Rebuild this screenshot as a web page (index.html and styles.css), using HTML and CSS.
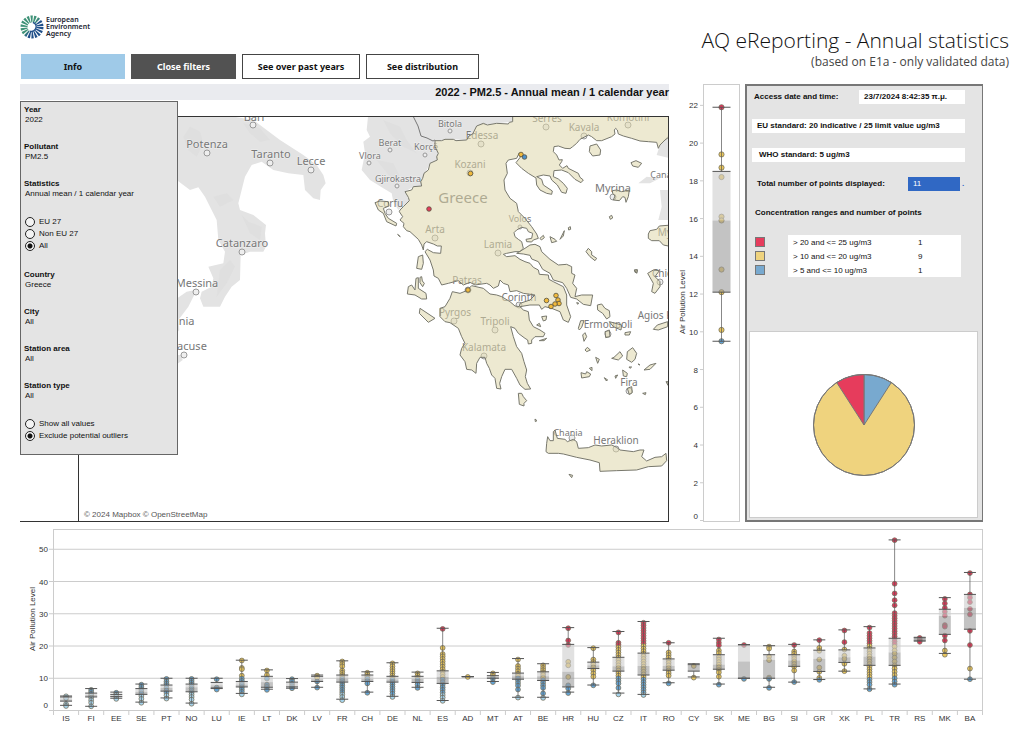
FILE: index.html
```html
<!DOCTYPE html>
<html lang="en">
<head>
    <meta charset="UTF-8" />
    <meta name="viewport" content="width=device-width, initial-scale=1.0">
    <title>AQ eReporting - Annual statistics</title>
    <link rel="stylesheet" href="styles.css">
</head>
<body>

    <header class="header">
        <div>
            <div class="logo">
                <svg width="26" height="26" viewBox="0 0 26 26" aria-hidden="true">
                    <defs>
                        <linearGradient id="sun" gradientUnits="userSpaceOnUse" x1="5" y1="6" x2="20" y2="19">
                            <stop offset="0.45" stop-color="#3f9277" />
                            <stop offset="0.6" stop-color="#20508a" />
                        </linearGradient>
                    </defs>
                    <circle cx="12" cy="13" r="8" fill="none" stroke="url(#sun)" stroke-width="7" stroke-dasharray="1.8 0.99" />
                    <path d="M13 8.5 A4.6 4.6 0 0 1 10 17.2" fill="none" stroke="#20508a" stroke-width="1.4" />
                </svg>
                <span>European<br>Environment<br>Agency</span>
            </div>
            <nav class="buttons">
                <button class="btn btn-info">Info</button>
                <button class="btn btn-dark">Close filters</button>
                <button class="btn btn-years">See over past years</button>
                <button class="btn btn-dist">See distribution</button>
            </nav>
        </div>
        <div class="heading">
            <h1>AQ eReporting - Annual statistics</h1>
            <p>(based on E1a - only validated data)</p>
        </div>
    </header>

    <main>
        <div class="top">
            <section class="map-area">
                <h2>2022 - PM2.5 - Annual mean / 1 calendar year</h2>

                <svg class="map" viewBox="79 117 589 404" preserveAspectRatio="xMidYMid slice" role="img" aria-label="Map of Greece">
                    <!-- neighbouring land -->
                    <g class="land" transform="translate(170 100) scale(.33333)">
                        <path d="M-80,40 180,48 250,60 330,120 400,165 440,195 460,225 467,250 452,270 450,300 430,295 405,270 400,225 355,220 310,210 275,185 245,195 225,230 215,270 205,310 210,330 250,345 288,375 285,400 288,440 280,455 240,455 212,465 210,540 185,560 165,590 150,620 100,620 90,595 95,575 125,560 130,535 115,500 160,490 165,455 145,420 140,360 120,320 105,290 85,262 60,270 20,240 -80,240z" />
                        <path d="M0,610 50,575 85,568 70,590 55,620 25,660 28,690 0,720z M0,765 35,765 38,780 25,790 0,790z" />
                    </g>
                    <g class="land" transform="translate(350 110) scale(.33333)">
                        <path d="M55,10 50,60 60,80 40,95 45,130 35,180 60,210 100,235 125,250 130,275 145,300 178,272 165,245 190,230 215,228 218,205 240,160 262,150 265,130 255,92 310,88 350,90 368,72 380,48 440,40 488,35 488,10z" />
                        <path d="M955,75 930,105 920,135 960,145 960,75z M865,220 890,200 930,205 900,220z M930,240 960,240 960,330 925,330 935,290z" />
                    </g>
                    <g class="relief" transform="translate(170 100) scale(.33333)">
                        <path d="M40,110 60,80 90,95 100,130 80,170 55,150z M220,70 270,85 300,120 270,125 240,100z M130,290 170,280 190,300 150,320z M215,345 235,365 275,380 270,420 240,400z M150,510 180,480 195,500 170,550 140,590z M640,60 690,80 710,120 740,160 700,140 660,100z M620,180 670,190 700,250 660,230z" />
                    </g>

                    <!-- place names sit under the tinted country shape -->
                    <g id="places"></g>

                    <g class="greece" transform="translate(350 110) scale(.33333)">
                        <path d="M150,300 160,290 178,272 175,262 165,245 185,240 190,230 215,228 212,215 218,205 222,190 235,180 240,160 262,150 260,140 265,130 255,110 255,92 275,92 285,88 310,88 318,92 350,90 357,78 368,72 380,48 400,40 412,45 440,40 475,42 478,37 488,35 488,10 965,10 965,75 945,90 930,105 925,115 920,97 895,95 870,93 845,85 820,78 805,72 802,60 797,55 793,60 795,72 785,80 755,92 740,92 725,80 715,75 690,88 680,100 668,110 660,116 645,115 625,108 612,110 610,125 620,135 627,150 637,149 635,155 628,165 638,175 651,167 655,175 685,190 690,202 700,210 693,218 675,208 655,188 635,180 612,182 610,200 625,207 640,220 652,235 648,250 635,247 622,225 605,210 600,198 580,195 560,200 575,208 580,225 607,243 605,253 590,250 570,240 560,225 558,204 535,190 515,175 498,158 512,140 507,130 500,145 475,150 468,160 472,190 462,210 465,240 480,265 500,280 505,305 525,325 545,350 560,372 565,385 550,390 545,396 530,395 528,388 545,385 548,370 535,365 530,355 515,352 500,360 492,368 495,380 505,388 515,395 520,415 510,425 495,425 470,430 460,433 470,440 495,437 510,448 525,455 540,460 550,472 565,480 568,493 595,495 597,508 610,515 640,530 650,555 650,585 662,620 655,637 640,630 630,605 605,595 585,590 575,598 568,585 540,585 510,590 520,600 535,605 538,630 550,650 570,660 585,670 580,680 555,680 545,690 545,700 535,702 533,690 525,685 505,670 495,655 482,650 490,680 500,710 515,730 522,755 530,780 526,800 532,820 542,837 525,838 510,825 500,805 485,778 465,778 455,800 449,820 453,837 440,835 435,805 425,795 418,775 410,760 405,742 390,742 380,760 378,790 365,780 350,778 345,755 330,735 335,715 345,700 335,680 325,655 300,638 285,635 270,620 270,595 285,590 300,565 307,545 330,550 350,542 365,527 400,535 420,552 440,555 455,560 480,575 495,588 508,590 510,580 540,570 555,555 520,550 500,542 480,545 475,525 460,520 450,510 445,528 430,535 420,525 410,520 375,525 360,517 340,525 325,512 295,520 275,525 265,505 252,498 250,480 240,450 225,425 232,418 250,428 272,430 274,408 262,408 250,402 230,395 222,402 220,420 215,405 205,388 180,365 170,362 160,350 162,340 150,330 158,320 148,305z" />
                        <path d="M525,415 540,405 555,403 570,410 575,425 600,448 625,465 650,463 665,470 665,490 675,495 668,520 680,535 675,560 695,555 728,555 722,587 700,583 680,567 662,562 650,535 638,518 610,510 600,490 578,478 565,455 545,447 540,436 520,432 500,430z" />
                        <!-- Ionian islands -->
                        <g transform="translate(-540 -30)">
                            <path d="M615,308 630,303 655,305 657,318 640,325 645,340 655,355 680,370 678,378 650,365 640,340 625,330z M745,470 758,465 760,490 755,508 740,505z M712,582 715,560 725,555 735,570 738,535 745,533 745,565 768,580 770,597 755,597 735,585z M750,532 755,530 757,543 763,550 758,560 750,548z M750,625 795,655 775,667 748,640z M683,403 691,410 687,408z" />
                        </g>
                        <!-- northern Aegean -->
                        <g transform="translate(450 0)">
                            <path d="M270,108 290,102 302,120 300,135 278,138 268,125z M393,158 408,152 425,160 415,172 398,168z M338,250 337,242 350,240 365,245 388,240 385,260 378,277 375,262 368,260 358,272 340,270 345,258z M328,320 335,316 338,324 331,328z M445,372 450,362 470,358 478,348 515,345 515,410 490,405 478,392 455,392 445,385z M120,385 130,376 133,383 124,390z M150,380 165,388 170,394 155,398z M180,388 193,362 190,378z M205,353 211,350 212,358 206,360z M258,425 265,415 275,425 275,435 290,445 285,452 270,440z M403,480 412,479 411,488 405,487z M443,490 460,480 478,482 465,500 480,515 480,530 465,550 455,545 460,520z" />
                        </g>
                        <!-- Cyclades, Crete and the south -->
                        <g transform="translate(210 480)">
                            <path d="M532,105 545,102 555,115 568,122 570,140 560,147 548,130 533,120z M568,155 605,165 603,180 580,170z M615,188 632,185 628,195 615,195z M555,185 568,180 570,200 557,203z M475,175 482,152 492,152 485,172 478,180z M488,195 495,188 500,200 492,214z M495,240 502,232 511,240 500,245z M527,262 538,268 533,280z M483,308 497,312 500,305 512,312 508,320 485,324z M508,295 516,292 516,302z M575,265 582,262 600,245 608,258 595,270z M622,245 638,233 650,250 645,268 635,277 620,268z M672,300 690,285 708,280 690,298z M608,300 622,310 620,320 610,318z M585,318 593,315 587,325z M622,355 635,350 637,368 628,374z M668,370 678,368 676,374z M700,178 712,165 743,155 743,170 715,180z M365,140 380,138 378,150 370,153z M350,165 358,160 362,170z M358,212 380,205 372,212z M295,370 305,370 310,380 320,392 312,400 312,408 298,403z M345,447 351,452 346,455z M553,323 563,330 558,332z M470,98 476,99 473,103z M738,335 744,335 744,346z M447,613 458,616 455,623z M627,291 635,291 630,295z M654,282 660,285z M643,0 652,0 650,10z" />
                            <path d="M378,545 380,520 383,500 390,512 400,512 400,485 405,480 412,505 435,508 442,515 460,508 470,515 475,535 505,533 525,525 545,528 575,525 590,532 600,540 640,545 660,540 672,540 665,560 680,573 705,562 725,560 738,550 740,572 725,588 685,590 650,600 590,602 540,604 538,578 510,570 470,562 430,552 415,550 385,550z" />
                        </g>
                    </g>
                    <path class="border" d="M413,116 L418,126 421,136 427,138 433,141 435,140" />
                    <g id="stations"></g>
                    <text class="credit" x="84" y="517">© 2024 Mapbox © OpenStreetMap</text>
                </svg>

                <form class="filters">
                    <div class="filter"><b>Year</b><span>2022</span></div>
                    <div class="filter"><b>Pollutant</b><span>PM2.5</span></div>
                    <div class="filter"><b>Statistics</b><span>Annual mean / 1 calendar year</span></div>
                    <div class="radios">
                        <label><input type="radio" name="region"> EU 27</label>
                        <label><input type="radio" name="region"> Non EU 27</label>
                        <label><input type="radio" name="region" checked> All</label>
                    </div>
                    <div class="filter"><b>Country</b><span>Greece</span></div>
                    <div class="filter"><b>City</b><span>All</span></div>
                    <div class="filter"><b>Station area</b><span>All</span></div>
                    <div class="filter"><b>Station type</b><span>All</span></div>
                    <div class="radios">
                        <label><input type="radio" name="outliers"> Show all values</label>
                        <label><input type="radio" name="outliers" checked> Exclude potential outliers</label>
                    </div>
                </form>
            </section>

            <svg id="levelChart" class="level-chart" viewBox="0 0 71 438" role="img" aria-label="Air pollution level"></svg>

            <aside class="info">
                <div class="info-row plain">
                    <span>Access date and time:</span>
                    <span class="access">23/7/2024 8:42:35 π.μ.</span>
                </div>
                <div class="info-row white">EU standard: 20 indicative / 25 limit value ug/m3</div>
                <div class="info-row white who">WHO standard: 5 ug/m3</div>
                <div class="info-row plain">
                    <span class="total-label">Total number of points displayed:</span>
                    <span class="total">11</span><span class="total-end">.</span>
                </div>
                <h3>Concentration ranges and number of points</h3>
                <table class="ranges">
                    <tr><td><i class="swatch red"></i></td><td>&gt; 20 and &lt;= 25 ug/m3</td><td>1</td></tr>
                    <tr><td><i class="swatch yellow"></i></td><td>&gt; 10 and &lt;= 20 ug/m3</td><td>9</td></tr>
                    <tr><td><i class="swatch blue"></i></td><td>&gt; 5 and &lt;= 10 ug/m3</td><td>1</td></tr>
                </table>
                <div class="pie">
                    <svg width="104" height="104" viewBox="-52 -52 104 104" role="img" aria-label="Share of points per range">
                        <circle r="50.5" fill="#efd37e" />
                        <path d="M0,0 V-50.5 A50.5,50.5 0 0 1 27.3,-42.5z" fill="#78a9cf" />
                        <path d="M0,0 V-50.5 A50.5,50.5 0 0 0 -27.3,-42.5z" fill="#e63c5c" />
                        <circle r="50.5" fill="none" />
                    </svg>
                </div>
            </aside>
        </div>

        <svg id="countryChart" class="country-chart" viewBox="0 0 963 204" role="img" aria-label="Air pollution level by country"></svg>
    </main>

    <script src="charts.js"></script>
</body>
</html>
```
FILE: styles.css
```css
* {
    box-sizing: border-box;
}

body {
    margin: 0;
    padding: 14px 15px 0 20px;
    background: #fff;
    color: #111;
    font-family: "Liberation Sans", Arial, sans-serif;
    font-size: 8px;
}

.header {
    display: flex;
    justify-content: space-between;
    margin-bottom: 5px;
}

.logo {
    display: flex;
    height: 26px;
    font: 600 7px/7px "Noto Sans", sans-serif;
    color: #1c2430;
}

.logo span {
    padding: 2px 0 0;
}

.buttons {
    display: flex;
    gap: 6px;
    margin: 14px 0 0 1px;
}

.btn {
    height: 25px;
    padding: 0;
    border: 1px solid #444;
    background: #fff;
    color: #111;
    font: bold 9px "Noto Sans", sans-serif;
    cursor: pointer;
}

.btn-info {
    width: 104px;
    background: #9fcae8;
    border-color: #9fcae8;
}

.btn-dark {
    width: 105px;
    background: #525252;
    border-color: #525252;
    color: #fff;
}

.btn-years {
    width: 118px;
}

.btn-dist {
    width: 113px;
}

.heading {
    padding-top: 13px;
    text-align: right;
    font-family: "Open Sans", sans-serif;
}

.heading h1 {
    margin: 0;
    font-size: 21px;
    font-weight: 300;
    line-height: 26px;
}

.heading p {
    margin: 0;
    color: #444;
    font-size: 12px;
    line-height: 18px;
}

main {
    margin-right: 26px;
}

.top {
    display: grid;
    grid-template-columns: minmax(0, 1fr) 71px 243px;
}

/* map */
.map-area {
    position: relative;
    display: flex;
    flex-direction: column;
    border-bottom: 1px solid #333;
}

.map-area h2 {
    margin: 0 0 16px;
    background: #eaebef;
    font-size: 11px;
    line-height: 16px;
    text-align: right;
}

.map {
    display: block;
    height: 405px;
    margin-left: 58px;
    border: 1px solid #333;
    border-bottom: 0;
    font-family: "Noto Sans", sans-serif;
}

.land {
    fill: #e3e3e3;
}

.relief {
    fill: #dadada;
    opacity: 0.4;
}

.greece path {
    fill: rgba(222, 215, 170, 0.54);
    stroke: #77776c;
    stroke-width: 3;
    stroke-linejoin: round;
}

.border {
    fill: none;
    stroke: #777;
}

.place {
    fill: #777;
    stroke: #fff;
    stroke-width: 1;
    stroke-opacity: 0.5;
    paint-order: stroke;
}

.place-dot {
    fill: #eee;
    stroke: #999;
}

.credit {
    fill: #555;
    font-family: "Liberation Sans", Arial, sans-serif;
    font-size: 8px;
}

/* filters open over the map */
.filters {
    position: absolute;
    top: 17px;
    left: 0;
    width: 158px;
    height: 354px;
    padding: 3px;
    background: #e4e4e4;
    border: 1px solid #666;
    line-height: 10px;
}

.filter {
    display: flex;
    flex-direction: column;
    margin-bottom: 17px;
}

.filter span {
    padding-left: 1px;
}

.radios {
    margin-bottom: 18px;
}

.radios label {
    display: flex;
    align-items: center;
    gap: 4px;
    height: 12px;
}

.radios input {
    appearance: none;
    width: 10px;
    height: 10px;
    margin: 0 0 0 1px;
    border: 1px solid #222;
    border-radius: 50%;
    background: #f4f4f4;
}

.radios input:checked {
    background: radial-gradient(circle, #111 2px, #f4f4f4 3px);
}

/* box plots */
.level-chart,
.country-chart {
    display: block;
    width: 100%;
    font-size: 8px;
    fill: #333;
}

.level-chart {
    height: 438px;
}

.country-chart {
    margin-top: 3px;
}

.frame {
    fill: none;
    stroke: #ccc;
}

.grid {
    stroke: #ccc;
}

.whisker {
    stroke: #555;
}

.box-upper {
    fill: rgba(205, 205, 205, 0.6);
}

.box-lower {
    fill: rgba(155, 155, 155, 0.6);
}

/* info panel */
.info {
    display: flex;
    flex-direction: column;
    gap: 15px;
    margin-left: 5px;
    padding: 4px 4px 2px 2px;
    background: #e4e4e4;
    border: 2px solid #777;
    border-right-width: 1px;
    font-weight: bold;
}

.info-row {
    display: flex;
    height: 14px;
    margin: 0 13px 0 3px;
    padding-left: 5px;
    line-height: 14px;
}

.info-row.plain {
    padding-left: 2px;
    justify-content: space-between;
}

.white,
.access {
    background: #fff;
}

.info-row.who {
    padding-left: 7px;
}

.access {
    width: 106px;
    padding-left: 5px;
}

.total-label {
    flex: 1;
    padding-left: 3px;
}

.total {
    width: 52px;
    padding-left: 5px;
    background: #3068c4;
    color: #fff;
    font-weight: normal;
}

.total-end {
    width: 5px;
    padding-left: 2px;
    color: #3068c4;
}

.info h3 {
    margin: 0 0 0 6px;
    font-size: 8px;
    line-height: 14px;
}

.ranges {
    width: 206px;
    margin-left: 6px;
    border-collapse: collapse;
    font-weight: normal;
}

.ranges td {
    height: 14px;
    padding: 0 5px;
    background: #fff;
}

.ranges td:first-child {
    width: 33px;
    padding: 0;
    background: none;
}

.ranges td:last-child {
    width: 48px;
}

.swatch {
    display: block;
    width: 10px;
    height: 10px;
    border: 1px solid #777;
}

.red {
    background: #e63c5c;
}

.yellow {
    background: #efd37e;
}

.blue {
    background: #78a9cf;
}

.pie {
    display: flex;
    flex: 1;
    align-items: center;
    justify-content: center;
    margin-top: 39px;
    background: #fff;
    border: 1px solid #ccc;
}

.pie svg {
    stroke: #777;
}
```
FILE: charts.js
```js
const NS = 'http://www.w3.org/2000/svg';

function add(parent, tag, attrs, text) {
    const el = document.createElementNS(NS, tag);
    for (const key in attrs) el.setAttribute(key, attrs[key]);
    if (text !== undefined) el.textContent = text;
    parent.appendChild(el);
    return el;
}

function colour(v) {
    if (v > 20) return '#e0365a';
    if (v > 10) return '#e9c65c';
    if (v > 5) return '#62a3d6';
    return '#a5d3ec';
}

// one box with whiskers: [min, q1, median, q3, max]
function drawBox(svg, x, half, y, stats, points, r) {
    const [min, q1, med, q3, max] = stats;
    points.forEach(p => add(svg, 'circle', { cx: x, cy: y(p), r: r, fill: colour(p), stroke: '#77725f', 'stroke-width': 0.8 }));
    add(svg, 'rect', { class: 'box-upper', x: x - half, width: half * 2, y: y(q3), height: y(med) - y(q3) });
    add(svg, 'rect', { class: 'box-lower', x: x - half, width: half * 2, y: y(med), height: y(q1) - y(med) });
    [min, q1, q3, max].forEach(v => add(svg, 'line', { class: 'whisker', x1: x - half, x2: x + half, y1: y(v), y2: y(v) }));
    add(svg, 'line', { class: 'whisker', x1: x, x2: x, y1: y(max), y2: y(q3), 'stroke-opacity': 0.7 });
    add(svg, 'line', { class: 'whisker', x1: x, x2: x, y1: y(q1), y2: y(min), 'stroke-opacity': 0.7 });
}

// ----- selected country -----
const level = document.getElementById('levelChart');
const ly = v => 436.5 - v * 18.87;
add(level, 'rect', { class: 'frame', x: 34.5, y: 0.5, width: 36, height: 437 });
for (let v = 0; v <= 22; v += 2) {
    add(level, 'line', { class: 'grid', x1: 31, x2: 34, y1: ly(v), y2: ly(v) });
    add(level, 'text', { x: 29, y: v === 0 ? 435 : ly(v) + 3, 'text-anchor': 'end' }, v);
}
add(level, 'text', { transform: 'translate(16 218) rotate(-90)', 'text-anchor': 'middle' }, 'Air Pollution Level');
drawBox(level, 52.5, 9, ly, [9.5, 12.1, 15.9, 18.5, 21.9],
    [21.9, 19.4, 18.7, 18.2, 16.1, 15.9, 13.3, 12.1, 10.1, 9.5], 2.6);

// ----- all countries -----
const countries = [
    ['IS', [1.6, 2.9, 3.4, 4.2, 4.5], [4.4, 3.8, 2, 1.4]],
    ['FI', [1.3, 4.2, 4.8, 5.4, 6.8], [6.4, 5.8, 5.2, 4.6, 4, 3.2, 2.4, 1.3]],
    ['EE', [3.8, 4.3, 4.6, 5, 5.7], [5.5, 4.9, 4.3, 3.6]],
    ['SE', [2.6, 5, 5.8, 6.8, 8.2], [8, 7.3, 6.6, 6, 5.3, 4.5, 3.6, 2.4]],
    ['PT', [3.9, 6, 7, 7.9, 10], [9.8, 9, 8.4, 7.8, 7, 6.2, 5.5, 4.7, 3.7]],
    ['NO', [2.3, 5.8, 7.2, 8.2, 10], [9.8, 9.2, 8.6, 8, 7.4, 6.8, 6.2, 5.6, 4.9, 4.2, 3.4, 2.1]],
    ['LU', [6.8, 7, 7.8, 8.7, 10], [9.7, 7.1, 6.5]],
    ['IE', [5.3, 7.3, 8, 9, 15.6], [15.5, 13.2, 12.8, 10.8, 9.9, 9.2, 8.5, 7.9, 7.2, 6.5, 5.8, 5]],
    ['LT', [6.6, 7.2, 8.8, 10.6, 12.6], [12.4, 11, 9.9, 8, 7.3, 6.4]],
    ['DK', [6.9, 7.3, 7.5, 8.8, 9.9], [9.7, 9, 8.2, 7.5, 6.9]],
    ['LV', [7.2, 9, 9.7, 10.6, 11], [10.8, 10.2, 9, 7.1]],
    ['FR', [3.5, 8.8, 9.9, 11, 15.4], [15.2, 14.4, 13.7, 12.4, 11.7, 11, 10.4, 9.8, 9.2, 8.5, 7.8, 7.1, 6.4, 5.7, 5, 4.2, 3.2]],
    ['CH', [5.7, 9, 9.8, 11, 12], [11.7, 11.1, 10.5, 9.9, 9.2, 8.4, 5.5]],
    ['DE', [4.4, 8.8, 9.6, 10.6, 14.8], [14.6, 13.7, 12.9, 12.2, 11.5, 10.8, 10.2, 9.5, 8.8, 8.1, 7.4, 6.7, 6, 5.2, 4.2]],
    ['NL', [7.2, 8.7, 9.8, 10.6, 11.9], [11.5, 10.8, 10.2, 9.5, 8.8, 8, 7]],
    ['ES', [3.1, 8.4, 10.4, 12.3, 25.5], [25.3, 19.4, 17.5, 16.8, 16, 15.2, 14.4, 13.6, 12.8, 12, 11.2, 10.4, 9.6, 8.8, 8, 7.2, 6.4, 5.6, 4.8, 4, 3]],
    ['AD', [10.5, 10.5, 10.5, 10.5, 10.5], [10.4]],
    ['MT', [9, 10, 10.4, 10.8, 11.8], [11.5, 10.8, 9.9, 8.8]],
    ['AT', [4.1, 9.7, 10.6, 11.6, 16.1], [15.8, 13.8, 13, 12.2, 11.4, 10.7, 10, 9.3, 8.5, 7.7, 6.5, 4]],
    ['BE', [4.1, 9.3, 10.6, 12, 14.5], [14, 13.2, 12.5, 11.8, 11, 10.2, 9.4, 8.6, 7.8, 7, 5.3, 3.9]],
    ['HR', [5.7, 7.3, 12, 20.5, 25.7], [25.5, 21.7, 20.3, 15.1, 14, 10.4, 7.8, 6.8, 5.4]],
    ['HU', [7.9, 13, 14, 15, 19.5], [19.3, 15.8, 15, 14.3, 13.4, 12.5, 11.5, 10.5, 7.8]],
    ['CZ', [5.4, 12.2, 13.7, 16.5, 24.5], [24.2, 21, 20.4, 19.6, 18.8, 18, 17.2, 16.4, 15.6, 14.8, 14, 13.2, 12.4, 11.6, 10.8, 10, 9.2, 8.4, 7, 5]],
    ['IT', [5, 11, 13.8, 17.8, 27.6], [27.2, 26.4, 25.6, 24.8, 24, 23.2, 22.4, 21.6, 20.8, 20, 19.2, 18.4, 17.6, 16.8, 16, 15.2, 14.4, 13.6, 12.8, 12, 11.2, 10.4, 9.6, 8.8, 8, 7.2, 6.4, 5.6, 4.8]],
    ['RO', [8.6, 12.5, 13.8, 16, 21], [21, 18, 17.2, 16.4, 15.6, 14.8, 14, 13.2, 12.4, 11.6, 10.8, 8.4]],
    ['CY', [10.4, 12.2, 14, 14.2, 14.5], [13.8, 10.2]],
    ['SK', [8.2, 12.8, 14.2, 17.3, 22.4], [22, 21, 20.2, 18.6, 17.8, 16.6, 15.8, 15, 14.2, 13.4, 12.6, 11.8, 10.5, 8]],
    ['ME', [10, 10, 15.2, 20.4, 20.4], [20.3, 9.8]],
    ['BG', [7.2, 10, 15.7, 17.3, 20.1], [19.8, 19.2, 16.7, 15.6, 10.2, 9.8, 7]],
    ['SI', [8.8, 13.7, 15.5, 17.3, 20.5], [20.3, 18.3, 17.6, 16.8, 16, 15.2, 14.4, 13.6, 12.4, 8.8]],
    ['GR', [9.6, 12.1, 16, 18.7, 21.9], [21.8, 19.4, 18.5, 15.8, 13.3, 12, 10.1, 9.5]],
    ['XK', [12.2, 14.9, 16.5, 18.8, 25], [24.8, 21.2, 18.9, 17, 16, 14.5, 12.2]],
    ['PL', [6.7, 14, 16.7, 19.4, 26], [25.7, 24, 23.2, 22.4, 21.6, 20.8, 20, 19.2, 18.4, 17.6, 16.8, 16, 15.2, 14.4, 13.6, 12.8, 12, 11.2, 10.4, 9.6, 8.8, 8, 6.6]],
    ['TR', [8.2, 14, 18, 22.4, 52.9], [52.8, 39.3, 36.3, 34.2, 32.6, 30.2, 29.4, 28.6, 27.8, 27, 26.2, 25.4, 24.6, 23.8, 23, 22.2, 21.4, 20.6, 19.8, 18.6, 17.6, 16.4, 15.2, 14, 13, 12, 11, 10, 9, 8]],
    ['RS', [21.5, 21.8, 22, 22.5, 22.7], [22.5, 21.9, 21.3]],
    ['MK', [17.7, 23.6, 29.3, 31.4, 35], [34.6, 33.2, 31.8, 30.6, 29.4, 26.5, 26, 23.2, 21.7, 18.6, 17.3]],
    ['BA', [9.7, 25.2, 31.8, 36, 42.8], [42.6, 36, 35, 33.6, 31.5, 29.8, 24.7, 20.3, 13, 9.7]]
];

const chart = document.getElementById('countryChart');
const cy = v => 185.5 - v * 3.225;
const left = 33.5;
const width = 929;
const step = width / countries.length;
add(chart, 'rect', { class: 'frame', x: left, y: 4.5, width: width, height: 181 });
for (let v = 0; v <= 50; v += 10) {
    add(chart, 'line', { class: 'grid', x1: 29, x2: left + width, y1: cy(v), y2: cy(v) });
    add(chart, 'text', { x: 28, y: v === 0 ? 183 : cy(v) + 3, 'text-anchor': 'end' }, v);
}
add(chart, 'text', { transform: 'translate(15 94) rotate(-90)', 'text-anchor': 'middle' }, 'Air Pollution Level');
countries.forEach(([code, stats, points], i) => {
    const x = left + step * (i + 0.5);
    add(chart, 'line', { class: 'grid', x1: x - step / 2, x2: x - step / 2, y1: 186, y2: 190 });
    add(chart, 'text', { x: x, y: 196, 'text-anchor': 'middle' }, code);
    drawBox(chart, x, 6, cy, stats, points, 2.4);
});
add(chart, 'line', { class: 'grid', x1: left + width, x2: left + width, y1: 186, y2: 190 });

// ----- map labels: name, x, y, size, dot x, dot y, dot radius -----
const places = [
    ['Bari', 254, 121, 11, 253, 125, 3], ['Potenza', 207, 148, 11, 207, 153, 3],
    ['Taranto', 271, 158, 11, 270, 163, 3], ['Lecce', 311, 165, 11, 311, 170, 3],
    ['Catanzaro', 242, 247, 11, 242, 252, 3], ['Messina', 197, 287, 11, 196, 292, 3],
    ['Catania', 175, 325, 11], ['Syracuse', 184, 350, 11, 184, 355, 3],
    ['Vlora', 370, 159, 9, 369, 163, 2], ['Berat', 390, 146, 9, 390, 150, 2],
    ['Korçë', 426, 150, 9, 425, 155, 2], ['Gjirokastra', 398, 182, 9, 397, 186, 2],
    ['Bitola', 450, 127, 9, 450, 131, 2], ['Edessa', 482, 139, 10, 481, 144, 3],
    ['Kozani', 470, 168, 10, 470, 173, 3], ['Greece', 463, 203, 15],
    ['Corfu', 390, 207, 10, 389, 212, 3], ['Arta', 435, 233, 10, 435, 238, 3],
    ['Lamia', 498, 248, 10, 498, 253, 3], ['Volos', 520, 222, 9, 520, 227, 2],
    ['Serres', 547, 122, 10, 546, 127, 3], ['Kavala', 584, 131, 10, 584, 136, 3],
    ['Komotini', 628, 121, 10, 628, 125, 3], ['Myrina', 613, 192, 11, 613, 197, 3],
    ['Çana', 661, 178, 9], ['Mytilene', 678, 236, 10],
    ['Chios', 665, 277, 10, 660, 282, 3], ['Patras', 467, 284, 10, 468, 290, 3],
    ['Corinth', 519, 301, 10, 519, 305, 3], ['Pyrgos', 455, 316, 10, 454, 321, 3],
    ['Tripoli', 495, 325, 10, 495, 330, 3], ['Kalamata', 484, 351, 10, 484, 356, 3],
    ['Ermoupoli', 608, 328, 10, 608, 334, 3], ['Agios Kirykos', 669, 319, 10],
    ['Fira', 629, 386, 10, 629, 391, 3], ['Chania', 568, 436, 9, 572, 438, 3],
    ['Heraklion', 616, 444, 10, 616, 449, 3]
];
const placeLayer = document.getElementById('places');
places.forEach(([name, x, y, size, dx, dy, r]) => {
    if (r) add(placeLayer, 'circle', { class: 'place-dot', cx: dx, cy: dy, r: r });
    add(placeLayer, 'text', { class: 'place', x: x, y: y, 'font-size': size, 'text-anchor': 'middle' }, name);
});

// monitoring stations
const stations = [
    [429, 209, '#e63c5c'], [470.5, 173.5, '#f0b93c'], [521, 154.5, '#f0b93c'], [524.5, 157, '#4b8fcb'],
    [468, 290, '#f0b93c'], [546.5, 300.5, '#f0b93c'], [556, 295.5, '#f0b93c'], [558, 300, '#f0b93c'],
    [559, 303.5, '#f0b93c'], [555, 304, '#f0b93c'], [551, 306.5, '#f0b93c']
];
const stationLayer = document.getElementById('stations');
stations.forEach(([x, y, fill]) => add(stationLayer, 'circle', { cx: x, cy: y, r: 2.3, fill: fill, stroke: '#55503c', 'stroke-width': 0.8 }));
```
